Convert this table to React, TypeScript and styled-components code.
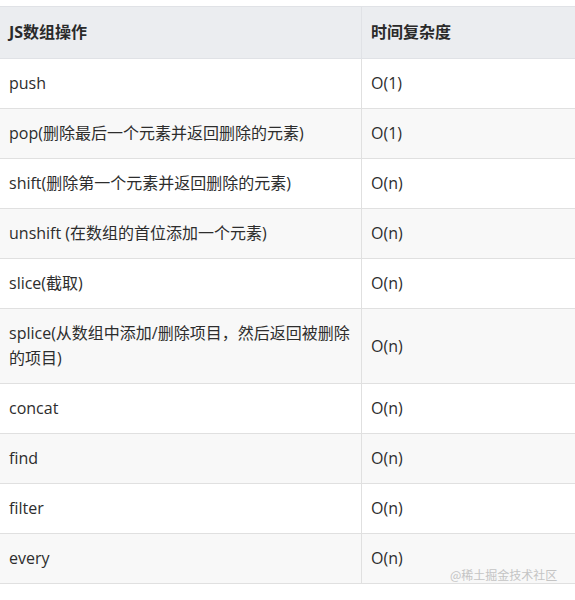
import styled, { createGlobalStyle } from "styled-components";

const GlobalStyle = createGlobalStyle`
  body {
    margin: 0;
    background: #fff;
    font-family: "Open Sans", "Noto Sans CJK SC", sans-serif;
  }
`;

type Row = { op: string; cost: string };

const rows: Row[] = [
  { op: "push", cost: "O(1)" },
  { op: "pop(删除最后一个元素并返回删除的元素)", cost: "O(1)" },
  { op: "shift(删除第一个元素并返回删除的元素)", cost: "O(n)" },
  { op: "unshift (在数组的首位添加一个元素)", cost: "O(n)" },
  { op: "slice(截取)", cost: "O(n)" },
  { op: "splice(从数组中添加/删除项目，然后返回被删除的项目)", cost: "O(n)" },
  { op: "concat", cost: "O(n)" },
  { op: "find", cost: "O(n)" },
  { op: "filter", cost: "O(n)" },
  { op: "every", cost: "O(n)" },
];

export default function App() {
  return (
    <>
      <GlobalStyle />
      <Page>
        <Table>
          <thead>
            <tr>
              <HeadCell $first>JS数组操作</HeadCell>
              <HeadCell>时间复杂度</HeadCell>
            </tr>
          </thead>
          <tbody>
            {rows.map((row, index) => (
              <BodyRow key={index} $striped={index % 2 === 1}>
                <Cell $first>{row.op}</Cell>
                <Cell>{row.cost}</Cell>
              </BodyRow>
            ))}
          </tbody>
        </Table>
        <Watermark>@稀土掘金技术社区</Watermark>
      </Page>
    </>
  );
}

const Page = styled.div`
  position: relative;
  padding-top: 6px;
  width: 575px;
  overflow: hidden;
`;

const Table = styled.table`
  border-collapse: collapse;
  width: 600px;
  table-layout: fixed;
  font-size: 16px;
  color: #2d2d2d;
`;

const HeadCell = styled.th<{ $first?: boolean }>`
  width: ${(p) => (p.$first ? "344px" : "auto")};
  text-align: left;
  font-weight: bold;
  background: #ebedf0;
  border: 1px solid #e0e2e6;
  border-left: ${(p) => (p.$first ? "none" : "1px solid #e0e2e6")};
  padding: 13px 8px 13px 9px;
  line-height: 25px;
  color: #2a2a2a;
`;

const BodyRow = styled.tr<{ $striped: boolean }>`
  background: ${(p) => (p.$striped ? "#f8f8f8" : "#fff")};
`;

const Cell = styled.td<{ $first?: boolean }>`
  border: 1px solid #e0e0e0;
  border-left: ${(p) => (p.$first ? "none" : "1px solid #e0e0e0")};
  padding: 12px 8px 12px 9px;
  line-height: 25px;
  vertical-align: middle;
`;

const Watermark = styled.div`
  position: absolute;
  left: 450px;
  top: 567px;
  font-family: "Noto Sans CJK SC", sans-serif;
  font-size: 12px;
  line-height: 16px;
  color: #c4c4c4;
`;
